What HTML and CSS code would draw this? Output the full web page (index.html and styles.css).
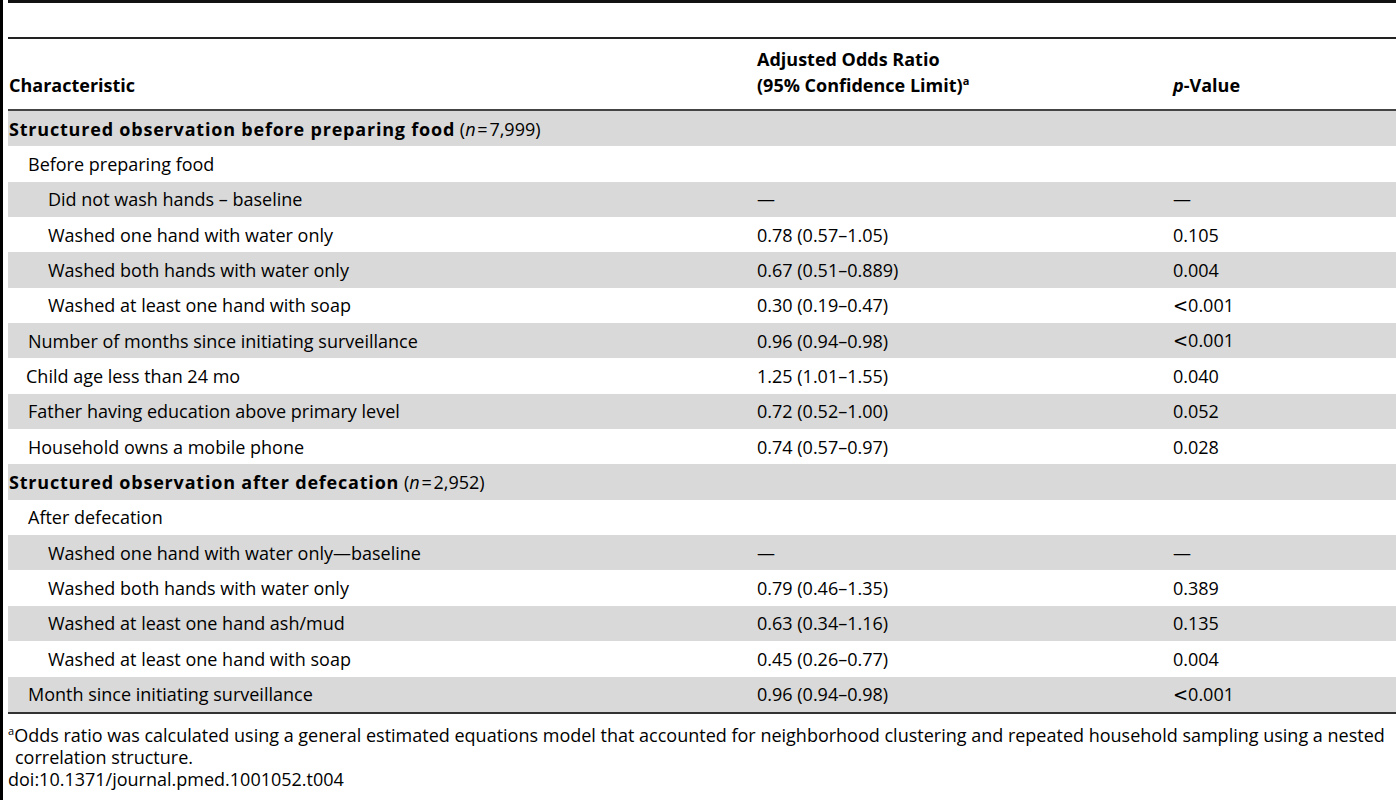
FILE: index.html
```html
<!DOCTYPE html>
<html>
<head>
<meta charset="utf-8">
<link rel="stylesheet" href="styles.css">
</head>
<body>
<div class="frame">
  <div class="topgap"></div>
  <table class="tbl">
    <colgroup><col class="c1"><col class="c2"><col class="c3"></colgroup>
    <thead>
      <tr class="head">
        <th>Characteristic</th>
        <th>Adjusted Odds Ratio<br>(95% Confidence Limit)<sup>a</sup></th>
        <th><i>p</i>-Value</th>
      </tr>
    </thead>
    <tbody>
      <tr class="g"><td><b>Structured observation before preparing food</b> (<i>n</i>&#8202;=&#8202;7,999)</td><td></td><td></td></tr>
      <tr><td class="l1">Before preparing food</td><td></td><td></td></tr>
      <tr class="g"><td class="l2">Did not wash hands – baseline</td><td>—</td><td>—</td></tr>
      <tr><td class="l2">Washed one hand with water only</td><td>0.78 (0.57–1.05)</td><td>0.105</td></tr>
      <tr class="g"><td class="l2">Washed both hands with water only</td><td>0.67 (0.51–0.889)</td><td>0.004</td></tr>
      <tr><td class="l2">Washed at least one hand with soap</td><td>0.30 (0.19–0.47)</td><td><span class="lt">&lt;</span>0.001</td></tr>
      <tr class="g"><td class="l1">Number of months since initiating surveillance</td><td>0.96 (0.94–0.98)</td><td><span class="lt">&lt;</span>0.001</td></tr>
      <tr><td class="l1b">Child age less than 24 mo</td><td>1.25 (1.01–1.55)</td><td>0.040</td></tr>
      <tr class="g"><td class="l1">Father having education above primary level</td><td>0.72 (0.52–1.00)</td><td>0.052</td></tr>
      <tr><td class="l1">Household owns a mobile phone</td><td>0.74 (0.57–0.97)</td><td>0.028</td></tr>
      <tr class="g"><td><b>Structured observation after defecation</b> (<i>n</i>&#8202;=&#8202;2,952)</td><td></td><td></td></tr>
      <tr><td class="l1">After defecation</td><td></td><td></td></tr>
      <tr class="g"><td class="l2">Washed one hand with water only—baseline</td><td>—</td><td>—</td></tr>
      <tr><td class="l2">Washed both hands with water only</td><td>0.79 (0.46–1.35)</td><td>0.389</td></tr>
      <tr class="g"><td class="l2">Washed at least one hand ash/mud</td><td>0.63 (0.34–1.16)</td><td>0.135</td></tr>
      <tr><td class="l2">Washed at least one hand with soap</td><td>0.45 (0.26–0.77)</td><td>0.004</td></tr>
      <tr class="g"><td class="l1">Month since initiating surveillance</td><td>0.96 (0.94–0.98)</td><td><span class="lt">&lt;</span>0.001</td></tr>
    </tbody>
  </table>
  <div class="foot">
    <p class="note"><sup>a</sup>Odds ratio was calculated using a general estimated equations model that accounted for neighborhood clustering and repeated household sampling using a nested correlation structure.</p>
    <p class="doi">doi:10.1371/journal.pmed.1001052.t004</p>
  </div>
</div>
</body>
</html>
```
FILE: styles.css
```css
html, body {
  margin: 0;
  padding: 0;
  background: #fff;
}
body {
  font-family: "Open Sans", "Noto Sans", sans-serif;
  font-size: 18px;
  color: #000;
  overflow: hidden;
}
.frame {
  border-left: 3px solid #000;
  padding-left: 5px;
  height: 800px;
  box-sizing: border-box;
  width: 1420px;
}
.topgap {
  border-top: 3px solid #111;
  height: 34px;
}
.tbl {
  border-collapse: collapse;
  width: 1420px;
  table-layout: fixed;
}
.c1 { width: 748px; }
.c2 { width: 416px; }
.c3 { width: auto; }
.tbl thead tr.head th {
  border-top: 2px solid #222;
  border-bottom: 2px solid #444;
  height: 59px;
  text-align: left;
  vertical-align: bottom;
  font-weight: 700;
  padding: 0 0 11px 1px;
  line-height: 26px;
}
.tbl sup {
  font-size: 11px;
  line-height: 0;
  vertical-align: 7px;
}
.tbl td {
  height: 35.35px;
  padding: 0 0 0 1px;
  vertical-align: middle;
  line-height: 22px;
  white-space: nowrap;
}
.tbl td b {
  letter-spacing: 0.8px;
}
.tbl tr.g td {
  background: #d9d9d9;
}
.tbl tbody tr:last-child td {
  border-bottom: 2px solid #333;
}
.tbl td.l1 { padding-left: 20px; }
.tbl td.l1b { padding-left: 18px; }
.tbl td.l2 { padding-left: 40px; }
.lt {
  font-family: "DejaVu Serif", serif;
  font-weight: 300;
}
.foot {
  padding-top: 10px;
}
.note {
  margin: 0;
  width: 1392px;
  line-height: 22px;
  padding-left: 7px;
  text-indent: -7px;
  box-sizing: border-box;
}
.note sup {
  font-size: 11px;
  line-height: 0;
  vertical-align: 7px;
}
.doi {
  margin: 0;
  line-height: 22px;
}
```
